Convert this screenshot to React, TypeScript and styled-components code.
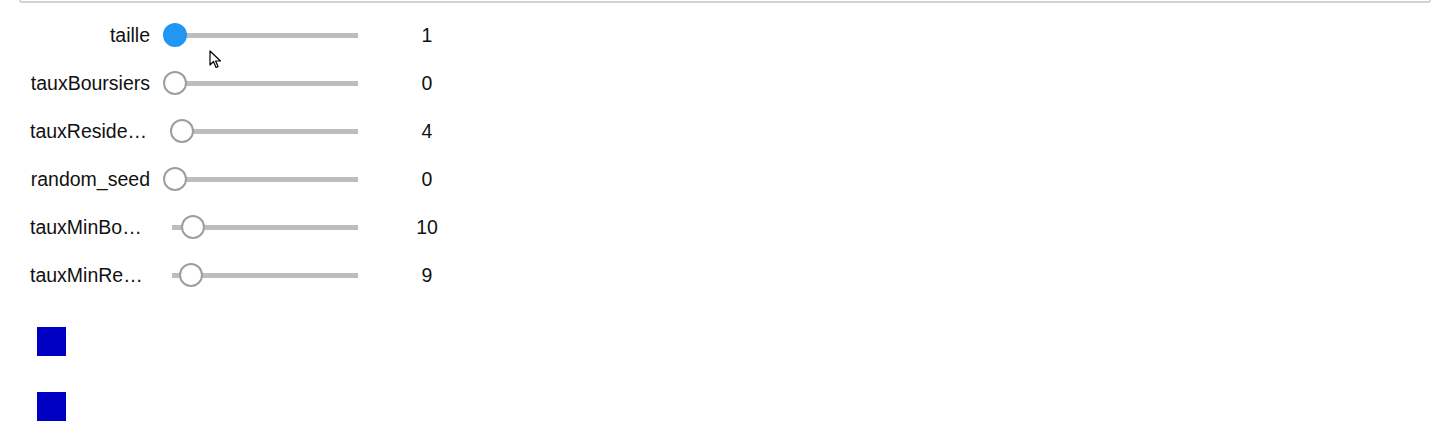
import styled, { createGlobalStyle } from "styled-components";

const GlobalStyle = createGlobalStyle`
  html, body {
    margin: 0;
    padding: 0;
    background: #ffffff;
  }
  body {
    font-family: "Liberation Sans", Arial, Helvetica, sans-serif;
  }
`;

const Page = styled.div`
  position: relative;
  width: 1438px;
  height: 428px;
  overflow: hidden;
`;

const CellEdge = styled.div`
  margin: 0 7px 0 19px;
  height: 1px;
  border: 2px solid #d2d2d2;
  border-top: none;
  border-radius: 0 0 3px 3px;
`;

const Controls = styled.div`
  padding-top: 8px;
  display: flex;
  flex-direction: column;
`;

const Row = styled.div`
  height: 48px;
  display: flex;
  align-items: center;
  padding-left: 30px;
`;

const Label = styled.div`
  width: 120px;
  text-align: right;
  font-size: 19.5px;
  color: #111;
  white-space: nowrap;
  overflow: hidden;
  text-overflow: ellipsis;
`;

const SliderBox = styled.div`
  position: relative;
  margin-left: 13px;
  width: 204px;
  height: 24px;
`;

const Track = styled.div`
  position: absolute;
  left: 9px;
  right: 9px;
  top: 10px;
  height: 5px;
  background: #bdbdbd;
`;

const Handle = styled.div<{ $active?: boolean }>`
  position: absolute;
  top: 0;
  width: 24px;
  height: 24px;
  box-sizing: border-box;
  border-radius: 50%;
  background: ${(p) => (p.$active ? "#2196f3" : "#ffffff")};
  border: 2px solid ${(p) => (p.$active ? "#2196f3" : "#9e9e9e")};
`;

const Readout = styled.div`
  margin-left: 30px;
  width: 60px;
  text-align: center;
  font-size: 19.5px;
  color: #111;
`;

const Swatches = styled.div`
  display: flex;
  flex-direction: column;
  gap: 36px;
  padding: 28px 0 0 37px;
`;

const Swatch = styled.div`
  width: 29px;
  height: 29px;
  background: #0000c4;
`;

const Pointer = styled.svg`
  position: absolute;
  left: 209px;
  top: 50px;
`;

type SliderSpec = {
  name: string;
  value: number;
  min: number;
  max: number;
  active?: boolean;
};

const sliders: SliderSpec[] = [
  { name: "taille", value: 1, min: 1, max: 100, active: true },
  { name: "tauxBoursiers", value: 0, min: 0, max: 100 },
  { name: "tauxResidents", value: 4, min: 0, max: 100 },
  { name: "random_seed", value: 0, min: 0, max: 100 },
  { name: "tauxMinBoursiers", value: 10, min: 0, max: 100 },
  { name: "tauxMinResidents", value: 9, min: 0, max: 100 },
];

function Slider({ s }: { s: SliderSpec }) {
  const frac = (s.value - s.min) / (s.max - s.min);
  return (
    <SliderBox>
      <Track />
      <Handle $active={s.active} style={{ left: `${frac * 180}px` }} />
    </SliderBox>
  );
}

function App() {
  return (
    <Page>
      <GlobalStyle />
      <CellEdge />
      <Controls>
        {sliders.map((s) => (
          <Row key={s.name}>
            <Label>{s.name}</Label>
            <Slider s={s} />
            <Readout>{s.value}</Readout>
          </Row>
        ))}
      </Controls>
      <Swatches>
        <Swatch />
        <Swatch />
      </Swatches>
      <Pointer width="14" height="20" viewBox="0 0 14 20">
        <path
          d="M1 1 L1 15 L4.5 11.5 L7 17.5 L9 16.6 L6.6 11 L11.5 11 Z"
          fill="#ffffff"
          stroke="#000000"
          strokeWidth="1.2"
          strokeLinejoin="round"
        />
      </Pointer>
    </Page>
  );
}

export default App;
